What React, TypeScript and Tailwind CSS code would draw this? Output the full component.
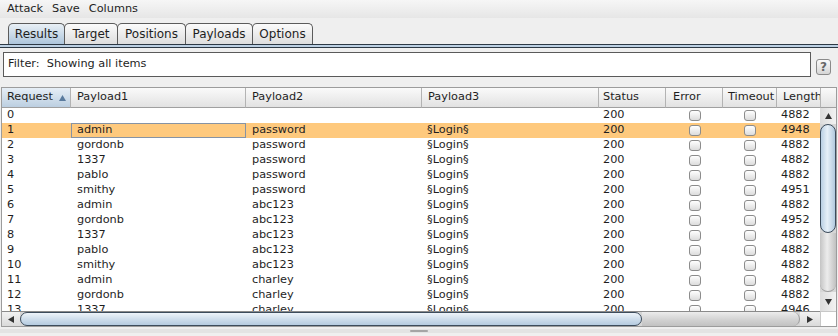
const rows: string[][] = [
  ['0', '', '', '', '4882'],
  ['1', 'admin', 'password', '§Login§', '4948'],
  ['2', 'gordonb', 'password', '§Login§', '4882'],
  ['3', '1337', 'password', '§Login§', '4882'],
  ['4', 'pablo', 'password', '§Login§', '4882'],
  ['5', 'smithy', 'password', '§Login§', '4951'],
  ['6', 'admin', 'abc123', '§Login§', '4882'],
  ['7', 'gordonb', 'abc123', '§Login§', '4952'],
  ['8', '1337', 'abc123', '§Login§', '4882'],
  ['9', 'pablo', 'abc123', '§Login§', '4882'],
  ['10', 'smithy', 'abc123', '§Login§', '4882'],
  ['11', 'admin', 'charley', '§Login§', '4882'],
  ['12', 'gordonb', 'charley', '§Login§', '4882'],
  ['13', '1337', 'charley', '§Login§', '4946'],
]

const tabs = [
  { name: 'Results', w: 'w-[57px]' },
  { name: 'Target', w: 'w-[54px]' },
  { name: 'Positions', w: 'w-[69px]' },
  { name: 'Payloads', w: 'w-[68px]' },
  { name: 'Options', w: 'w-[61px]' },
]

function Tri({ dir, color = '#333' }: { dir: 'up' | 'down' | 'left' | 'right'; color?: string }) {
  const pts = {
    up: '0,6 3.5,0 7,6',
    down: '0,0 3.5,6 7,0',
    left: '6,0 0,3.5 6,7',
    right: '0,0 6,3.5 0,7',
  }[dir]
  const vertical = dir === 'up' || dir === 'down'
  return (
    <svg width={vertical ? 7 : 6} height={vertical ? 6 : 7} viewBox={vertical ? '0 0 7 6' : '0 0 6 7'}>
      <polygon points={pts} fill={color} />
    </svg>
  )
}

function Check() {
  return (
    <div className="w-[12px] h-[11px] rounded-[3px] border border-[#8c8c8c] bg-gradient-to-b from-white to-[#dcdcdc]" />
  )
}

function HeaderCell({ label, w, pl, active }: { label: string; w: string; pl: string; active?: boolean }) {
  return (
    <div
      className={`${w} ${pl} shrink-0 h-full flex items-center border-r border-b border-r-[#b3b3b3] border-b-[#a0a0a0] ${
        active
          ? 'bg-gradient-to-b from-[#e6eef6] to-[#bccfe1]'
          : 'bg-gradient-to-b from-[#fafafa] to-[#e2e2e2]'
      }`}
    >
      <span>{label}</span>
      {active && (
        <span className="ml-[6px] mt-[1px]">
          <Tri dir="up" color="#5a7b9e" />
        </span>
      )}
    </div>
  )
}

export default function App() {
  return (
    <div className="w-[838px] h-[336px] overflow-hidden bg-[#efefef] font-['DejaVu_Sans',sans-serif] text-[11.3px] text-[#1e1e1e]">
      {/* menu */}
      <div className="h-[18px] flex items-center gap-[9px] pl-[7px] bg-gradient-to-b from-[#f6f6f6] to-[#e6e6e6]">
        <span>Attack</span>
        <span>Save</span>
        <span>Columns</span>
      </div>

      {/* tabs */}
      <div className="h-[26px] flex items-end pl-[8px]">
        {tabs.map((t, i) => (
          <div
            key={t.name}
            className={`${t.w} ${i > 0 ? '-ml-px' : ''} h-[21px] shrink-0 flex items-center justify-center rounded-t-[5px] border border-b-0 border-[#5b5b5b] text-[12px] ${
              i === 0
                ? 'bg-gradient-to-b from-[#e9f0f6] to-[#aec6dc]'
                : 'bg-gradient-to-b from-[#fbfbfb] to-[#dedede]'
            }`}
          >
            {t.name}
          </div>
        ))}
      </div>
      <div className="h-[4px] border-y border-[#2d3945] bg-[#bcd0e3]" />

      {/* filter */}
      <div className="flex items-center mt-[4px] h-[25px]">
        <div className="ml-[3px] w-[808px] h-[25px] border border-[#5a5a5a] bg-white flex items-center pl-[4px] whitespace-pre">
          Filter:  Showing all items
        </div>
        <div className="ml-[5px] w-[15px] h-[16px] mt-[4px] rounded-[3px] border border-[#8a8a8a] bg-gradient-to-b from-[#fafafa] to-[#d6d6d6] flex items-center justify-center text-[12px] font-bold text-[#666]">
          ?
        </div>
      </div>

      {/* results table */}
      <div className="mt-[10px] ml-[1px] w-[836px] border border-[#9c9c9c] bg-white grid grid-cols-[818px_16px] grid-rows-[20px_203px_15px]">
        <div className="flex overflow-hidden h-[20px]">
          <HeaderCell label="Request" w="w-[69px]" pl="pl-[5px]" active />
          <HeaderCell label="Payload1" w="w-[175px]" pl="pl-[6px]" />
          <HeaderCell label="Payload2" w="w-[176px]" pl="pl-[6px]" />
          <HeaderCell label="Payload3" w="w-[177px]" pl="pl-[6px]" />
          <HeaderCell label="Status" w="w-[67px]" pl="pl-[4px]" />
          <HeaderCell label="Error" w="w-[57px]" pl="pl-[7px]" />
          <HeaderCell label="Timeout" w="w-[54px]" pl="pl-[5px]" />
          <HeaderCell label="Length" w="w-[60px]" pl="pl-[6px]" />
        </div>
        <div className="h-[20px] border-b border-l border-b-[#a0a0a0] border-l-[#b3b3b3] bg-gradient-to-b from-[#fafafa] to-[#e2e2e2]" />

        <div className="overflow-hidden">
          {rows.map(r => {
            const sel = r[0] === '1'
            return (
              <div key={r[0]} className={`flex h-[15px] items-center ${sel ? 'bg-[#fec97d]' : ''}`}>
                <div className="w-[69px] shrink-0 pl-[5px]">{r[0]}</div>
                <div className={`w-[175px] shrink-0 h-[15px] flex items-center ${sel ? 'border border-[#8693a4] pl-[5px]' : 'pl-[6px]'}`}>
                  {r[1]}
                </div>
                <div className="w-[176px] shrink-0 pl-[6px]">{r[2]}</div>
                <div className="w-[177px] shrink-0 pl-[5px]">{r[3]}</div>
                <div className="w-[67px] shrink-0 pl-[4px]">200</div>
                <div className="w-[57px] shrink-0 flex justify-center">
                  <Check />
                </div>
                <div className="w-[54px] shrink-0 flex justify-center">
                  <Check />
                </div>
                <div className="w-[60px] shrink-0 pl-[4px]">{r[4]}</div>
              </div>
            )
          })}
        </div>

        {/* vertical scrollbar */}
        <div className="flex flex-col bg-[#d6d6d6]">
          <div className="h-[16px] flex items-center justify-center bg-gradient-to-r from-[#dcdcdc] to-[#f2f2f2]">
            <Tri dir="up" />
          </div>
          <div className="h-[109px] rounded-t-[8px] rounded-b-[8px] border border-[#3c4c5c] bg-[linear-gradient(to_right,#b9cfe3,#e7f0f8_45%,#b2c9de)]" />
          <div className="flex-1 rounded-b-[8px] border-b border-[#9a9a9a] bg-[linear-gradient(to_right,#c4c4c4,#ececec_45%,#c0c0c0)]" />
          <div className="h-[19px] flex items-center justify-center bg-gradient-to-r from-[#dcdcdc] to-[#f2f2f2]">
            <Tri dir="down" />
          </div>
        </div>

        {/* horizontal scrollbar */}
        <div className="flex border-t border-[#8a8a8a] bg-[#d6d6d6]">
          <div className="w-[18px] shrink-0 flex items-center justify-center bg-gradient-to-b from-[#f2f2f2] to-[#dadada]">
            <Tri dir="left" />
          </div>
          <div className="w-[622px] shrink-0 rounded-l-[8px] rounded-r-[8px] border border-[#3c4c5c] bg-[linear-gradient(to_bottom,#eef4fa,#cfdeec_50%,#b5cbe0)]" />
          <div className="w-[158px] shrink-0 rounded-r-[8px] border-r border-[#9a9a9a] bg-[linear-gradient(to_bottom,#ececec,#d2d2d2_55%,#c2c2c2)]" />
          <div className="w-[20px] shrink-0 flex items-center justify-center bg-gradient-to-b from-[#f2f2f2] to-[#dadada]">
            <Tri dir="right" />
          </div>
        </div>
        <div className="bg-white border-l border-t border-[#c8c8c8]" />
      </div>

      {/* split pane divider */}
      <div className="h-[10px] pt-[1px]">
        <div className="h-[4px] mt-[1px] bg-[#e3e3e3] flex justify-center items-center">
          <div className="w-[18px] h-[2px] bg-[#a5a5a5] rounded-[1px]" />
        </div>
      </div>
    </div>
  )
}
